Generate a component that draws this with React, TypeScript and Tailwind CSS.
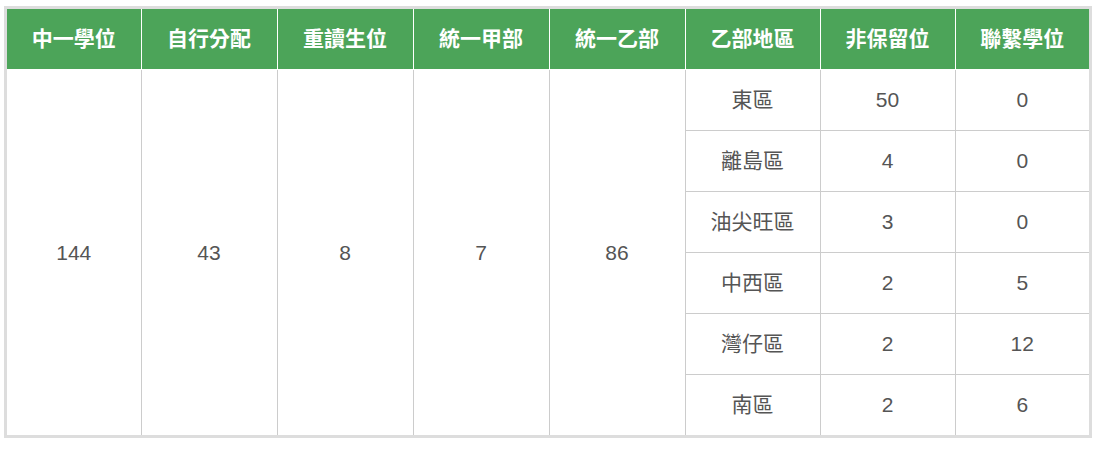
const headers = ["中一學位", "自行分配", "重讀生位", "統一甲部", "統一乙部", "乙部地區", "非保留位", "聯繫學位"]
const colWidths = ["w-[134px]", "w-[136px]", "w-[136px]", "w-[136px]", "w-[136px]", "w-[135px]", "w-[135px]", "w-[134px]"]

const districts = [
  { name: "東區", open: 50, linked: 0 },
  { name: "離島區", open: 4, linked: 0 },
  { name: "油尖旺區", open: 3, linked: 0 },
  { name: "中西區", open: 2, linked: 5 },
  { name: "灣仔區", open: 2, linked: 12 },
  { name: "南區", open: 2, linked: 6 },
]

const summary = [144, 43, 8, 7, 86]

export default function App() {
  return (
    <div
      className="min-h-[450px] bg-white pt-[6px] pl-[4px]"
      style={{ fontFamily: '"Liberation Sans", "Noto Sans CJK TC", sans-serif' }}
    >
      <div className="w-[1088px] border-[3px] border-[#dddddd]">
        <table className="w-full table-fixed border-collapse border-hidden text-[21px] text-[#555555]">
          <colgroup>
            {colWidths.map((w, i) => (
              <col key={i} className={w} />
            ))}
          </colgroup>
          <thead>
            <tr className="h-[60px] bg-[#4ca459]">
              {headers.map((h) => (
                <th key={h} className="border border-white px-1 text-center text-[21px] font-bold text-white">
                  {h}
                </th>
              ))}
            </tr>
          </thead>
          <tbody>
            {districts.map((d, i) => (
              <tr key={d.name} className="h-[61px]">
                {i === 0 &&
                  summary.map((v, j) => (
                    <td key={j} rowSpan={6} className="border border-[#cccccc] text-center align-middle">
                      {v}
                    </td>
                  ))}
                <td className="border border-[#cccccc] text-center">{d.name}</td>
                <td className="border border-[#cccccc] text-center">{d.open}</td>
                <td className="border border-[#cccccc] text-center">{d.linked}</td>
              </tr>
            ))}
          </tbody>
        </table>
      </div>
    </div>
  )
}
